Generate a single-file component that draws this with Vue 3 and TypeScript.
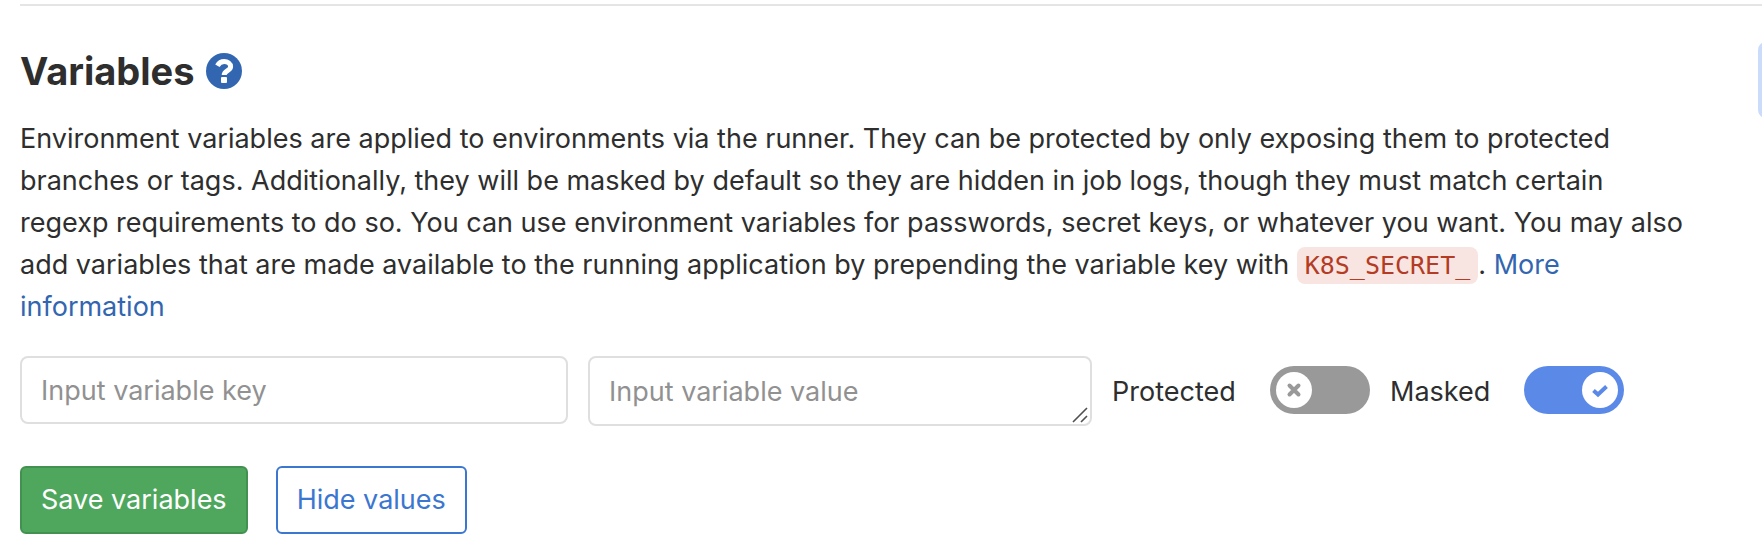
<script setup lang="ts">
import { ref } from 'vue'

const variableKey = ref('')
const variableValue = ref('')
const isProtected = ref(false)
const isMasked = ref(true)
</script>

<template>
  <section class="settings">
    <header class="head">
      <h4 class="title">
        Variables
        <a class="help" href="#">
          <svg viewBox="0 0 36 36" aria-hidden="true">
            <circle cx="18" cy="18" r="18" fill="#3266b0" />
            <path
              d="M11.4 12.800C13 10 15.200 8.600 18.200 8.600C21.600 8.600 24.600 10.500 24.600 13.700C24.600 17.700 18.200 17.400 18.200 22"
              fill="none"
              stroke="#fff"
              stroke-width="5"
            />
            <rect x="15" y="24" width="6" height="6" rx="1" fill="#fff" />
          </svg>
        </a>
      </h4>
      <span class="edge" aria-hidden="true"></span>
    </header>

    <p class="intro">
      Environment variables are applied to environments via the runner. They can be protected by
      only exposing them to protected branches or tags. Additionally, they will be masked by default
      so they are hidden in job logs, though they must match certain regexp requirements to do so.
      You can use environment variables for passwords, secret keys, or whatever you want. You may
      also add variables that are made available to the running application by prepending the
      variable key with <code>K8S_SECRET_</code>. <a href="#">More information</a>
    </p>

    <form @submit.prevent>
      <div class="row">
        <input v-model="variableKey" class="field" type="text" placeholder="Input variable key" aria-label="Input variable key" />
        <div class="value">
          <textarea v-model="variableValue" class="field" rows="1" placeholder="Input variable value" aria-label="Input variable value"></textarea>
          <svg class="grip" viewBox="0 0 16 16" aria-hidden="true">
            <path d="M1 15L15 1M9 15L15 9" fill="none" stroke="#505050" stroke-width="1.6" />
          </svg>
        </div>
        <label class="switch">
          <span class="name">Protected</span>
          <input v-model="isProtected" type="checkbox" role="switch" />
          <span class="track">
            <span class="knob">
              <svg v-if="isProtected" viewBox="0 0 36 36"><path d="M11.500 18.500L16 22.500L24.500 14.500" /></svg>
              <svg v-else viewBox="0 0 36 36"><path d="M13.500 13.500L22.500 22.500M22.500 13.500L13.500 22.500" stroke-linecap="round" /></svg>
            </span>
          </span>
        </label>
        <label class="switch masked">
          <span class="name">Masked</span>
          <input v-model="isMasked" type="checkbox" role="switch" />
          <span class="track">
            <span class="knob">
              <svg v-if="isMasked" viewBox="0 0 36 36"><path d="M11.500 18.500L16 22.500L24.500 14.500" /></svg>
              <svg v-else viewBox="0 0 36 36"><path d="M13.500 13.500L22.500 22.500M22.500 13.500L13.500 22.500" stroke-linecap="round" /></svg>
            </span>
          </span>
        </label>
      </div>

      <div class="actions">
        <button class="btn save" type="submit">Save variables</button>
        <button class="btn hide" type="button">Hide values</button>
      </div>
    </form>
  </section>
</template>

<style>
body {
  margin: 0;
  background: #fff;
}
</style>

<style scoped>
.settings {
  box-sizing: border-box;
  margin-top: 4px;
  margin-left: 20px;
  padding-right: 68px;
  border-top: 2px solid #e5e5e5;
  overflow: hidden;
  color: #2e2e2e;
  font-family: Inter, 'Liberation Sans', sans-serif;
  font-size: 27px;
  line-height: 42px;
}

a {
  color: #3266b0;
  text-decoration: none;
}

.head {
  display: flex;
  align-items: flex-start;
  justify-content: space-between;
  height: 76px;
  margin-top: 36px;
  margin-right: -104px;
}

.title {
  display: flex;
  align-items: center;
  gap: 12px;
  margin: 5px 0 0;
  font-size: 38px;
  font-weight: 700;
  line-height: 48px;
}

.help,
.help svg {
  display: block;
  width: 36px;
  height: 36px;
}

.edge {
  width: 40px;
  height: 76px;
  border-radius: 8px;
  background: #cbdcfb;
}

.intro {
  margin: 0 0 28px;
}

code {
  padding: 4px 8px;
  border-radius: 8px;
  background: #f8e5e1;
  color: #b43b24;
  font-family: 'DejaVu Sans Mono', monospace;
  font-size: 25px;
  line-height: 1;
}

.row {
  display: grid;
  grid-template-columns: minmax(0, 548fr) minmax(0, 504fr) auto auto;
  align-items: start;
  gap: 20px;
  padding-right: 70px;
}

.field {
  box-sizing: border-box;
  display: block;
  width: 100%;
  height: 68px;
  margin: 0;
  padding: 13px 19px;
  border: 2px solid #dfdfdf;
  border-radius: 8px;
  background: #fff;
  color: #2e2e2e;
  font: inherit;
}

.field::placeholder {
  color: #919191;
  opacity: 1;
}

.value {
  position: relative;
}

textarea.field {
  height: 70px;
  overflow: hidden;
  resize: none;
}

.grip {
  position: absolute;
  right: 4px;
  bottom: 3px;
  width: 16px;
  height: 16px;
}

.switch {
  position: relative;
  display: flex;
  align-items: center;
  justify-content: space-between;
  width: 258px;
  height: 68px;
}

.masked {
  width: 234px;
}

.name {
  padding-top: 4px;
}

.switch input {
  position: absolute;
  right: 0;
  width: 100px;
  height: 48px;
  margin: 0;
  opacity: 0;
}

.track {
  box-sizing: border-box;
  display: flex;
  width: 100px;
  height: 48px;
  padding: 6px;
  border-radius: 24px;
  background: #999;
  color: #999;
}

.switch input:checked + .track {
  justify-content: flex-end;
  background: #5b89e8;
  color: #5b89e8;
}

.knob {
  width: 36px;
  height: 36px;
  border-radius: 50%;
  background: #fff;
}

.knob svg {
  display: block;
  fill: none;
  stroke: currentColor;
  stroke-width: 4;
}

.actions {
  display: flex;
  gap: 28px;
  margin-top: 40px;
}

.btn {
  height: 68px;
  padding: 0 19px;
  border: 2px solid;
  border-radius: 6px;
  font: inherit;
}

.save {
  border-color: #429150;
  background: #4fa75e;
  color: #fff;
}

.hide {
  border-color: #3b76d0;
  background: #fff;
  color: #3b76d0;
}
</style>
